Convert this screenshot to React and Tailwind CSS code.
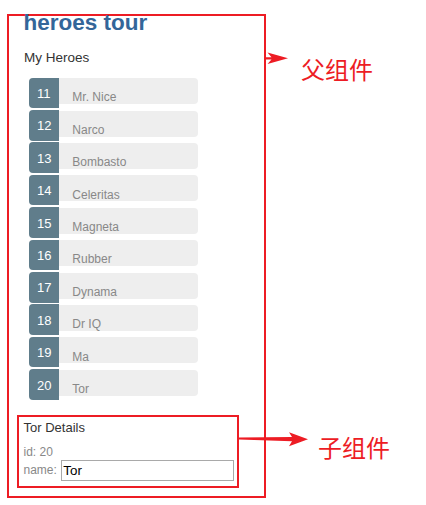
const heroes = [
  { id: 11, name: 'Mr. Nice' },
  { id: 12, name: 'Narco' },
  { id: 13, name: 'Bombasto' },
  { id: 14, name: 'Celeritas' },
  { id: 15, name: 'Magneta' },
  { id: 16, name: 'Rubber' },
  { id: 17, name: 'Dynama' },
  { id: 18, name: 'Dr IQ' },
  { id: 19, name: 'Ma' },
  { id: 20, name: 'Tor' },
];

export default function App() {
  return (
    <div className="relative w-[426px] h-[505px] bg-white overflow-hidden font-['Liberation_Sans',Arial,sans-serif]">
      <div className="ml-[7px] pt-[14px]">
        <div className="w-[259px] h-[484px] border-2 border-[#ed1c24]">
          <h1 className="-mt-[3.8px] ml-[14.5px] text-[22.5px] leading-[22px] font-bold text-[#336699]">heroes tour</h1>
          <h2 className="mt-[16.1px] ml-[15px] text-[13.5px] leading-[16px] text-[#333]">My Heroes</h2>
          <ul className="mt-[12px] ml-[19.5px] w-[169px] flex flex-col gap-[6.4px]">
            {heroes.map((h) => (
              <li key={h.id} className="h-[26px] bg-[#eeeeee] rounded-[4px] flex items-start">
                <span className="-mt-[0.6px] h-[30.6px] w-[30px] shrink-0 bg-[#607d8b] rounded-l-[4px] text-white text-[13px] leading-[13px] pt-[9.3px] pl-[8.5px]">
                  {h.id}
                </span>
                <span className="ml-[13.8px] mt-[13.2px] text-[12px] leading-[12px] text-[#888]">{h.name}</span>
              </li>
            ))}
          </ul>
          <div className="mt-[19.1px] ml-[8px] w-[222px] h-[73px] border-2 border-[#ed1c24] pl-[4.5px]">
            <h2 className="mt-[2.7px] text-[13px] leading-[15px] text-[#333]">Tor Details</h2>
            <div className="mt-[10.8px] text-[12px] leading-[14px] text-[#888]">id: 20</div>
            <div className="mt-[0.5px] flex items-center gap-[4.5px] text-[12px] leading-[14px] text-[#888]">
              <span>name:</span>
              <input
                value="Tor"
                readOnly
                className="w-[172.4px] h-[21px] border border-[#a9a9a9] px-[1px] text-[13.33px] text-black outline-none bg-white font-['Liberation_Sans',Arial,sans-serif]"
              />
            </div>
          </div>
        </div>
      </div>

      {/* annotation: parent component */}
      <svg className="absolute left-[264px] top-[52px]" width="26" height="13" viewBox="0 0 26 13">
        <path d="M0 5.2 H7.5 L3.5 0.5 L24 6.3 L3.5 12.1 L7.5 7.4 H0 Z" fill="#ed1c24" />
      </svg>
      <div className="absolute left-[301px] top-[57px] text-[24px] leading-[24px] text-[#ed1c24] font-['Noto_Sans_CJK_SC',sans-serif]">
        父组件
      </div>

      {/* annotation: child component */}
      <svg className="absolute left-[239px] top-[431px]" width="70" height="17" viewBox="0 0 70 17">
        <path d="M0 6.5 L53 5.9 L50 1.2 L69 8.2 L50 15.3 L53 10.3 L0 8.6 Z" fill="#ed1c24" />
      </svg>
      <div className="absolute left-[318px] top-[435px] text-[24px] leading-[24px] text-[#ed1c24] font-['Noto_Sans_CJK_SC',sans-serif]">
        子组件
      </div>
    </div>
  );
}
